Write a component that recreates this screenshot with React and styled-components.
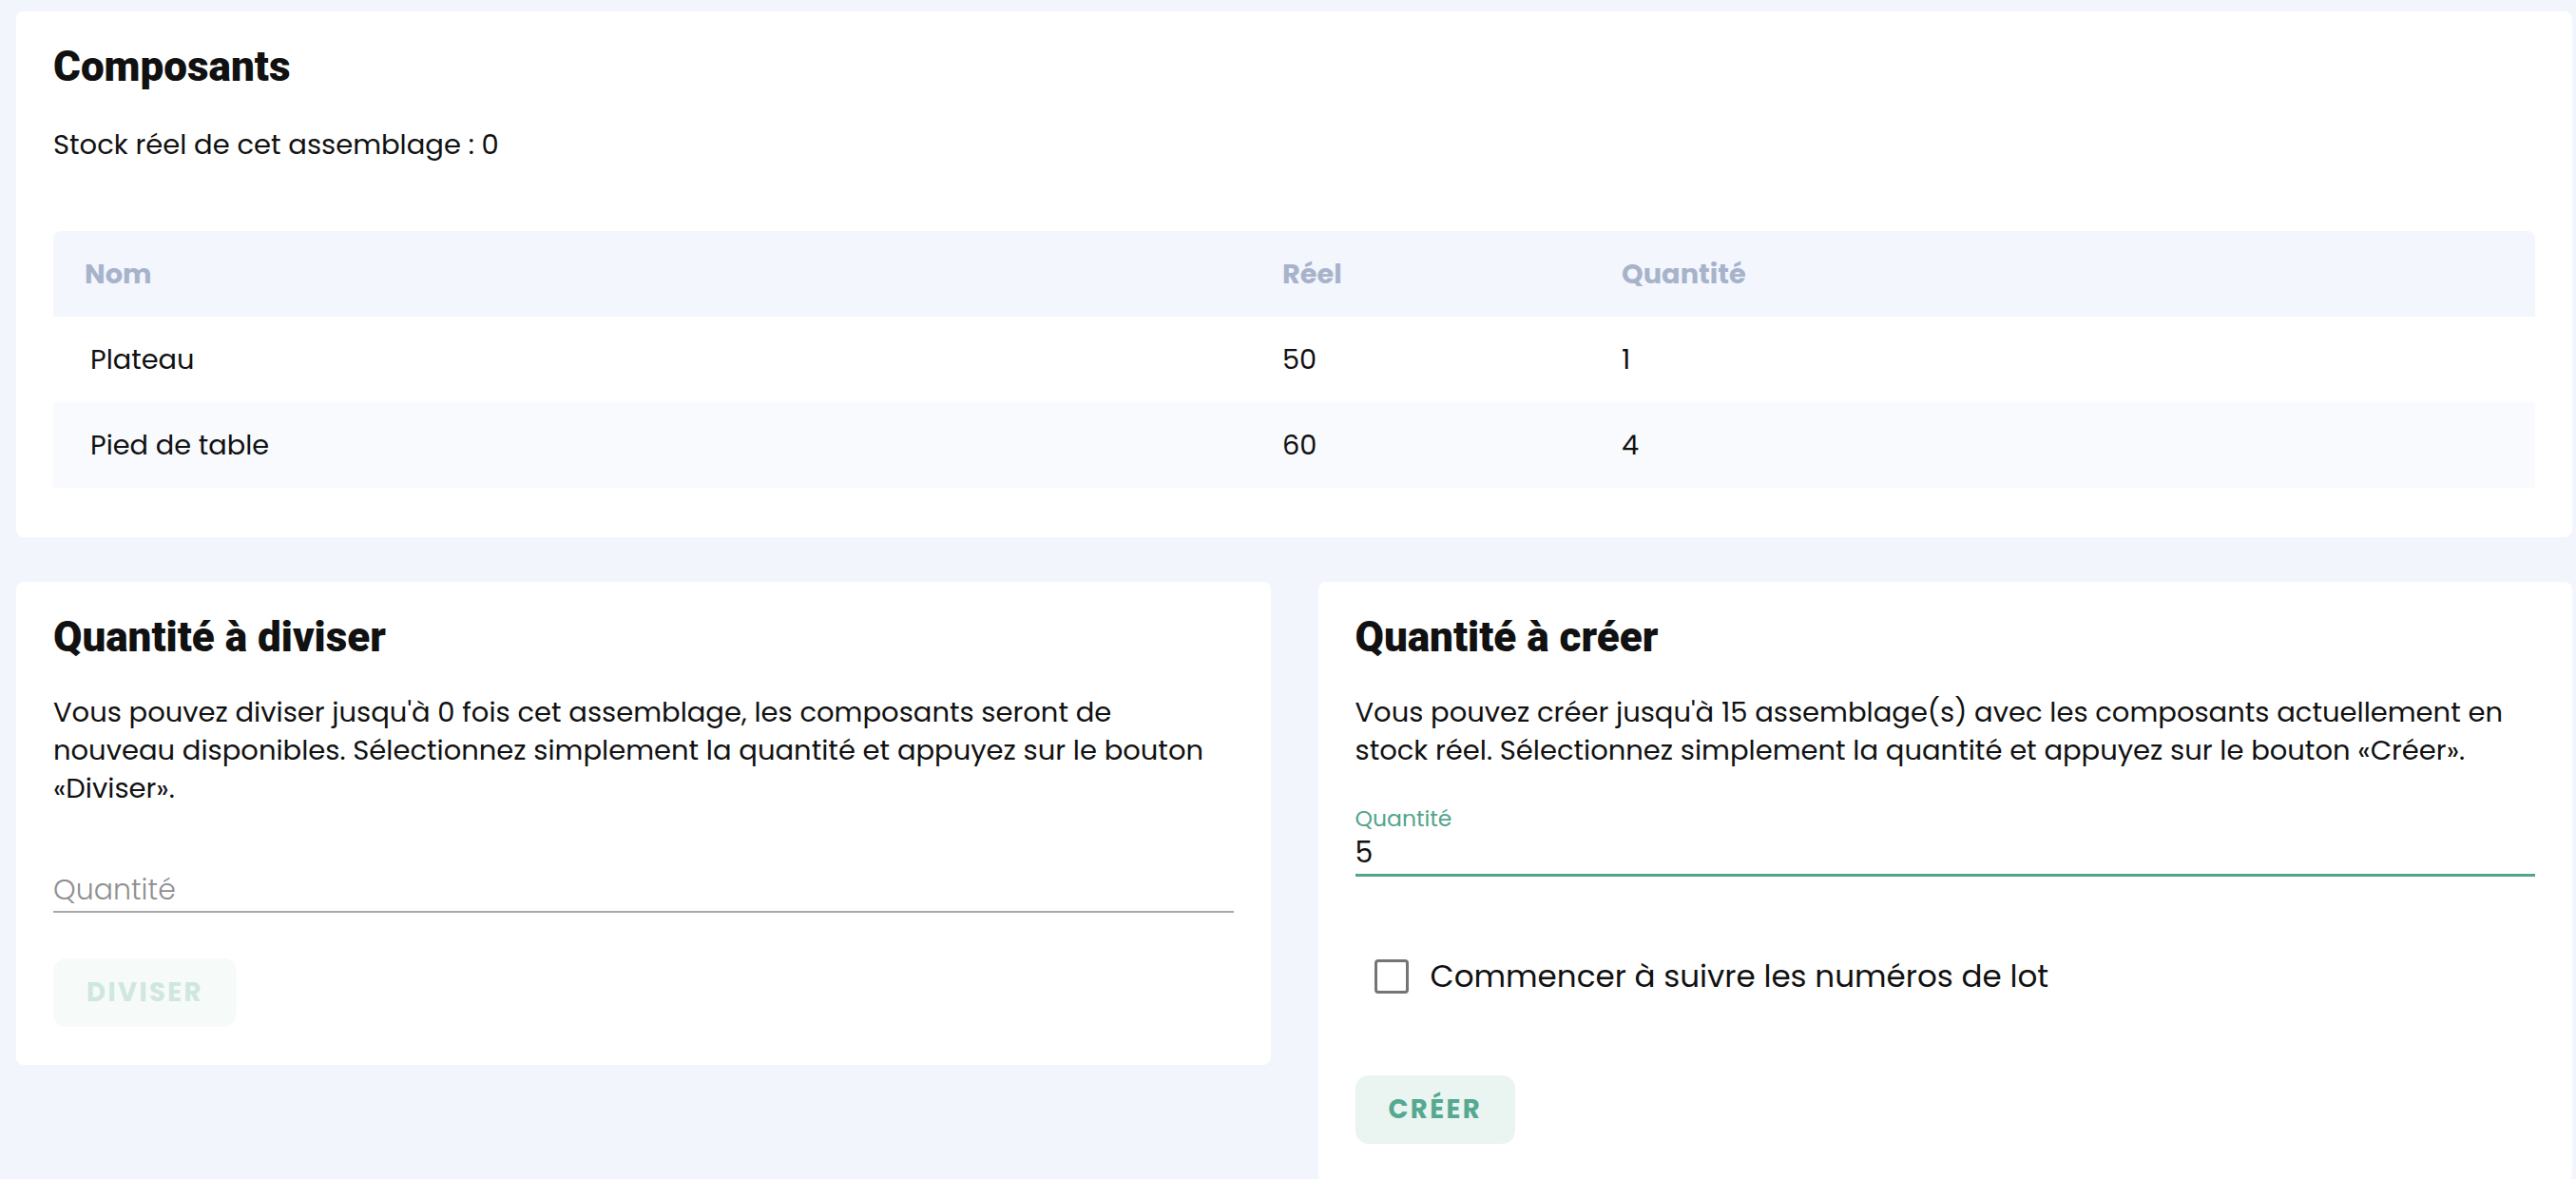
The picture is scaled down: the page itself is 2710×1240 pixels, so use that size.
import React from "react";
import styled, { createGlobalStyle } from "styled-components";

const GlobalStyle = createGlobalStyle`
  body {
    margin: 0;
    background: #f2f5fc;
    font-family: "Poppins", "Open Sans", sans-serif;
    color: #111;
  }
`;

const Page = styled.div`
  padding: 12px 4px 0 17px;
  display: grid;
  grid-template-columns: 1fr 1fr;
  column-gap: 50px;
  row-gap: 47px;
  align-items: start;
`;

const Card = styled.section`
  background: #fff;
  border-radius: 8px;
  padding: ${(p) => (p.wide ? "30px 39px 52px 39px" : "30px 39px 40px 39px")};
  grid-column: ${(p) => (p.wide ? "1 / -1" : "auto")};
  min-height: ${(p) => (p.tall ? "631px" : "0")};
  box-sizing: border-box;
`;

const Title = styled.h2`
  margin: 0;
  font-family: "Roboto", "Inter", sans-serif;
  font-weight: 900;
  font-size: 44px;
  line-height: 56px;
`;

const Text = styled.p`
  margin: ${(p) => p.m || "31px 0 0 0"};
  font-size: 29px;
  line-height: 40px;
`;

const Table = styled.div`
  margin-top: 71px;
  display: grid;
  grid-template-columns: 1293px 357px 1fr;
`;

const HeadCell = styled.div`
  background: #f3f6fd;
  height: 90px;
  display: flex;
  align-items: center;
  padding-left: ${(p) => (p.first ? "33px" : "0")};
  font-weight: 700;
  font-size: 28.8px;
  color: #a7b3cb;
  border-radius: ${(p) => (p.first ? "8px 0 0 0" : p.last ? "0 8px 0 0" : "0")};
`;

const Cell = styled.div`
  background: ${(p) => (p.alt ? "#f8fafe" : "#fff")};
  height: 90px;
  display: flex;
  align-items: center;
  padding-left: ${(p) => (p.first ? "39px" : "0")};
  font-size: 28.8px;
`;

const Field = styled.div`
  margin-top: ${(p) => p.mt || "0"};
  display: flex;
  flex-direction: column;
  border-bottom: ${(p) => (p.active ? "3px solid #52a58b" : "2px solid #a9a9a9")};
`;

const FieldLabel = styled.span`
  font-size: 23.5px;
  line-height: 28px;
  color: #52a58b;
`;

const FieldValue = styled.span`
  font-size: 30px;
  line-height: 44px;
  color: ${(p) => (p.placeholder ? "#8f8f8f" : "#111")};
  font-weight: ${(p) => (p.placeholder ? 300 : 400)};
`;

const CheckRow = styled.label`
  margin-top: 81px;
  margin-left: 20px;
  display: flex;
  align-items: center;
  gap: 23px;
  font-size: 32.6px;
`;

const Box = styled.span`
  width: 30px;
  height: 30px;
  border: 3px solid #757575;
  border-radius: 4px;
  flex: none;
`;

const Button = styled.button`
  margin-top: ${(p) => p.mt || "48px"};
  height: 72px;
  padding: 0 35px;
  border: none;
  border-radius: 14px;
  font-family: "Poppins", "Open Sans", sans-serif;
  font-weight: 700;
  font-size: 27.5px;
  letter-spacing: 2.4px;
  background: ${(p) => (p.disabled ? "#f6faf9" : "#eaf4f1")};
  color: ${(p) => (p.disabled ? "#cfe7df" : "#55a990")};
`;

const rows = [
  { name: "Plateau", reel: 50, qty: 1 },
  { name: "Pied de table", reel: 60, qty: 4 },
];

export default function App() {
  return (
    <>
      <GlobalStyle />
      <Page>
        <Card wide>
          <Title>Composants</Title>
          <Text m="34px 0 0 0">Stock réel de cet assemblage : 0</Text>
          <Table>
            <HeadCell first>Nom</HeadCell>
            <HeadCell>Réel</HeadCell>
            <HeadCell last>Quantité</HeadCell>
            {rows.map((r, i) => (
              <React.Fragment key={r.name}>
                <Cell first alt={i % 2 === 1}>{r.name}</Cell>
                <Cell alt={i % 2 === 1}>{r.reel}</Cell>
                <Cell alt={i % 2 === 1}>{r.qty}</Cell>
              </React.Fragment>
            ))}
          </Table>
        </Card>

        <Card>
          <Title>Quantité à diviser</Title>
          <Text>
            Vous pouvez diviser jusqu'à 0 fois cet assemblage, les composants seront de
            nouveau disponibles. Sélectionnez simplement la quantité et appuyez sur le bouton
            «Diviser».
          </Text>
          <Field mt="65px">
            <FieldValue placeholder>Quantité</FieldValue>
          </Field>
          <Button disabled>DIVISER</Button>
        </Card>

        <Card tall>
          <Title>Quantité à créer</Title>
          <Text>
            Vous pouvez créer jusqu'à 15 assemblage(s) avec les composants actuellement en
            stock réel. Sélectionnez simplement la quantité et appuyez sur le bouton «Créer».
          </Text>
          <Field mt="38px" active>
            <FieldLabel>Quantité</FieldLabel>
            <FieldValue>5</FieldValue>
          </Field>
          <CheckRow>
            <Box />
            Commencer à suivre les numéros de lot
          </CheckRow>
          <Button mt="80px">CRÉER</Button>
        </Card>
      </Page>
    </>
  );
}
